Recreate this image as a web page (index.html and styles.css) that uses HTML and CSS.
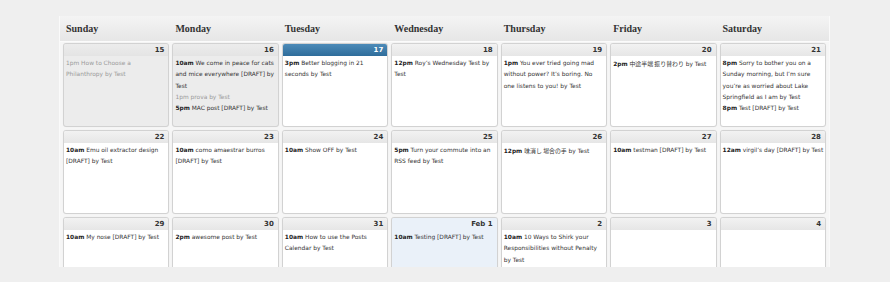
FILE: index.html
```html
<!DOCTYPE html>
<html lang="en">
<head>
<meta charset="utf-8">
<title>Posts Calendar</title>
<link rel="stylesheet" href="styles.css">
</head>
<body>
<div class="calendar">
  <div class="head">
    <div class="dow">Sunday</div>
    <div class="dow">Monday</div>
    <div class="dow">Tuesday</div>
    <div class="dow">Wednesday</div>
    <div class="dow">Thursday</div>
    <div class="dow">Friday</div>
    <div class="dow">Saturday</div>
  </div>
  <div class="weeks">
    <div class="week">
      <div class="day past"><div class="num">15</div><ul class="posts">
        <li class="pub"><b>1pm</b> How to Choose a Philanthropy by Test</li></ul></div>
      <div class="day past"><div class="num">16</div><ul class="posts">
        <li><b>10am</b> We come in peace for cats and mice everywhere [DRAFT] by Test</li>
        <li class="pub"><b>1pm</b> prova by Test</li>
        <li><b>5pm</b> MAC post [DRAFT] by Test</li></ul></div>
      <div class="day today"><div class="num">17</div><ul class="posts">
        <li><b>3pm</b> Better blogging in 21 seconds by Test</li></ul></div>
      <div class="day"><div class="num">18</div><ul class="posts">
        <li><b>12pm</b> Roy’s Wednesday Test by Test</li></ul></div>
      <div class="day"><div class="num">19</div><ul class="posts">
        <li><b>1pm</b> You ever tried going mad without power? It’s boring. No one listens to you! by Test</li></ul></div>
      <div class="day"><div class="num">20</div><ul class="posts">
        <li><b>2pm</b> <span class="ja">中途半端 振り替わり</span> by Test</li></ul></div>
      <div class="day"><div class="num">21</div><ul class="posts">
        <li><b>8pm</b> Sorry to bother you on a Sunday morning, but I’m sure you’re as worried about Lake Springfield as I am by Test</li>
        <li><b>8pm</b> Test [DRAFT] by Test</li></ul></div>
    </div>
    <div class="week">
      <div class="day"><div class="num">22</div><ul class="posts">
        <li><b>10am</b> Emu oil extractor design [DRAFT] by Test</li></ul></div>
      <div class="day"><div class="num">23</div><ul class="posts">
        <li><b>10am</b> como amaestrar burros [DRAFT] by Test</li></ul></div>
      <div class="day"><div class="num">24</div><ul class="posts">
        <li><b>10am</b> Show OFF by Test</li></ul></div>
      <div class="day"><div class="num">25</div><ul class="posts">
        <li><b>5pm</b> Turn your commute into an RSS feed by Test</li></ul></div>
      <div class="day"><div class="num">26</div><ul class="posts">
        <li><b>12pm</b> <span class="ja">味消し 場合の手</span> by Test</li></ul></div>
      <div class="day"><div class="num">27</div><ul class="posts">
        <li><b>10am</b> testman [DRAFT] by Test</li></ul></div>
      <div class="day"><div class="num">28</div><ul class="posts">
        <li><b>12am</b> virgil’s day [DRAFT] by Test</li></ul></div>
    </div>
    <div class="week">
      <div class="day"><div class="num">29</div><ul class="posts">
        <li><b>10am</b> My nose [DRAFT] by Test</li></ul></div>
      <div class="day"><div class="num">30</div><ul class="posts">
        <li><b>2pm</b> awesome post by Test</li></ul></div>
      <div class="day"><div class="num">31</div><ul class="posts">
        <li><b>10am</b> How to use the Posts Calendar by Test</li></ul></div>
      <div class="day next"><div class="num">Feb 1</div><ul class="posts">
        <li><b>10am</b> Testing [DRAFT] by Test</li></ul></div>
      <div class="day"><div class="num">2</div><ul class="posts">
        <li><b>10am</b> 10 Ways to Shirk your Responsibilities without Penalty by Test</li></ul></div>
      <div class="day"><div class="num">3</div><ul class="posts"></ul></div>
      <div class="day"><div class="num">4</div><ul class="posts"></ul></div>
    </div>
  </div>
</div>
</body>
</html>
```
FILE: styles.css
```css
html, body {
  margin: 0;
  padding: 0;
  background: #efefef;
}

body {
  padding-top: 16px;
}

.calendar {
  margin-left: 59px;
  width: 769px;
  height: 251px;
  overflow: hidden;
  border-left: 1px solid #fafafa;
  border-right: 1px solid #fafafa;
  background: #f6f6f6;
  font-family: "DejaVu Sans", sans-serif;
}

.head {
  display: grid;
  grid-template-columns: repeat(7, 1fr);
  column-gap: 3px;
  padding: 0 3px 0 3px;
  height: 25px;
  background: linear-gradient(#f4f4f4, #e6e6e6);
  border-bottom: 1px solid #fbfbfb;
}

.dow {
  font-family: "Liberation Serif", serif;
  font-weight: bold;
  font-size: 10px;
  color: #333;
  line-height: 25px;
  padding-left: 3px;
}

.weeks {
  display: flex;
  flex-direction: column;
  gap: 3px;
  padding: 1px 3px 0 3px;
}

.week {
  display: grid;
  grid-template-columns: repeat(7, 1fr);
  column-gap: 3px;
}

.day {
  height: 82px;
  border: 1px solid #d2d2d2;
  border-radius: 3px;
  background: #fff;
  box-shadow: 0 0 1px rgba(0, 0, 0, 0.08);
  overflow: hidden;
}

.num {
  height: 12px;
  line-height: 12px;
  text-align: right;
  padding-right: 4px;
  font-size: 7px;
  font-weight: bold;
  color: #333;
  background: linear-gradient(#f2f2f2, #e6e6e6);
}

.past {
  background: #ececec;
}

.past .num {
  background: linear-gradient(#ececec, #e4e4e4);
}

.today .num {
  background: linear-gradient(#4d8bb8, #2f6d9b);
  color: #fff;
}

.next {
  background: #eaf1f9;
}

.next .num {
  background: #eaf1f9;
}

.posts {
  list-style: none;
  margin: 0;
  padding: 2px 1px 0 2px;
  font-size: 5.9px;
  line-height: 11.3px;
  color: #333;
}

.posts li {
  display: block;
}

.posts b {
  color: #222;
}

.posts .pub,
.posts .pub b {
  color: #9a9a9a;
  font-weight: normal;
}

.ja {
  font-family: "Noto Sans CJK JP", sans-serif;
}
```
